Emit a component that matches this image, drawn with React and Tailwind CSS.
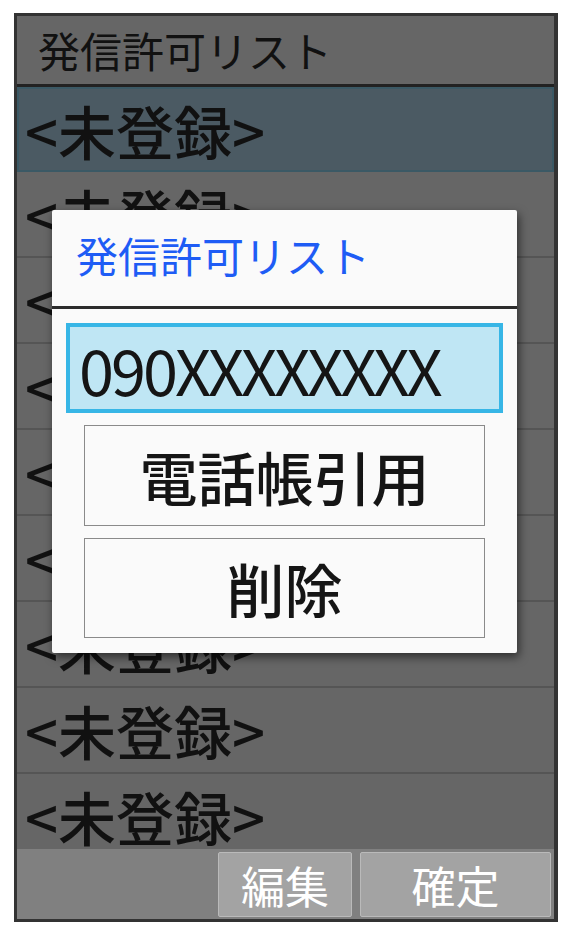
import React from "react";

function Row() {
  return (
    <div className="shrink-0 h-[86px] border-b-2 border-[#555555] flex items-center pl-[8px] text-[58px] leading-none text-[#111] font-medium">
      &lt;未登録&gt;
    </div>
  );
}

export default function App() {
  const rows = [0, 1, 2, 3, 4, 5, 6, 7];
  return (
    <div className="relative w-[570px] h-[936px] bg-white font-['Noto_Sans_CJK_JP','Noto_Sans',sans-serif] overflow-hidden">
      <div className="pt-[13px] pl-[14px]">
        <div className="w-[544px] h-[909px] border-[#333333] border-l-[3px] border-t-[3px] border-b-[3px] border-r-4 bg-[#666666] flex flex-col overflow-hidden">
          <div className="shrink-0 h-[68px] flex items-center pl-[21px] text-[42px] leading-none text-[#111]">
            発信許可リスト
          </div>
          <div className="shrink-0 h-[3px] bg-[#222222]" />
          <div className="flex-1 flex flex-col overflow-hidden">
            <div className="shrink-0 h-[85px] border-2 border-[#3b5965] bg-[#4b5a63] flex items-center pl-[6px] text-[58px] leading-none text-[#111] font-medium">
              &lt;未登録&gt;
            </div>
            {rows.map((r) => (
              <Row key={r} />
            ))}
          </div>
          <div className="shrink-0 h-[70px] bg-[#808080] flex justify-end gap-2 pt-[3px] pb-[2px] pr-[3px]">
            <div className="w-[134px] h-[65px] bg-[#a3a3a3] border border-[#bababa] rounded-[2px] flex items-center justify-center text-white text-[44px] leading-none">
              編集
            </div>
            <div className="w-[191px] h-[65px] bg-[#a3a3a3] border border-[#bababa] rounded-[2px] flex items-center justify-center text-white text-[44px] leading-none">
              確定
            </div>
          </div>
        </div>
      </div>

      <div className="absolute left-[52px] top-[210px] w-[465px] h-[443px] bg-[#fafafa] rounded-[2px] shadow-[2px_4px_10px_rgba(0,0,0,0.55)] flex flex-col">
        <div className="shrink-0 h-[96px] flex items-center pl-[24px] pb-[6px] text-[42px] leading-none text-[#1e5cf5]">
          発信許可リスト
        </div>
        <div className="shrink-0 h-[3px] bg-[#2b2b2b]" />
        <div className="flex flex-col px-[14px] pt-[14px]">
          <div className="h-[90px] border-4 border-[#37b6e6] bg-[#bfe6f4] flex items-center pl-[9px] text-[63px] leading-none text-[#151515] tracking-[-3px]">
            090XXXXXXXX
          </div>
          <div className="mx-[18px] mt-[12px] h-[101px] border border-[#8a8a8a] flex items-center justify-center text-[58px] leading-none text-[#151515] font-medium">
            電話帳引用
          </div>
          <div className="mx-[18px] mt-[12px] h-[100px] border border-[#8a8a8a] flex items-center justify-center text-[58px] leading-none text-[#151515] font-medium">
            削除
          </div>
        </div>
      </div>
    </div>
  );
}
